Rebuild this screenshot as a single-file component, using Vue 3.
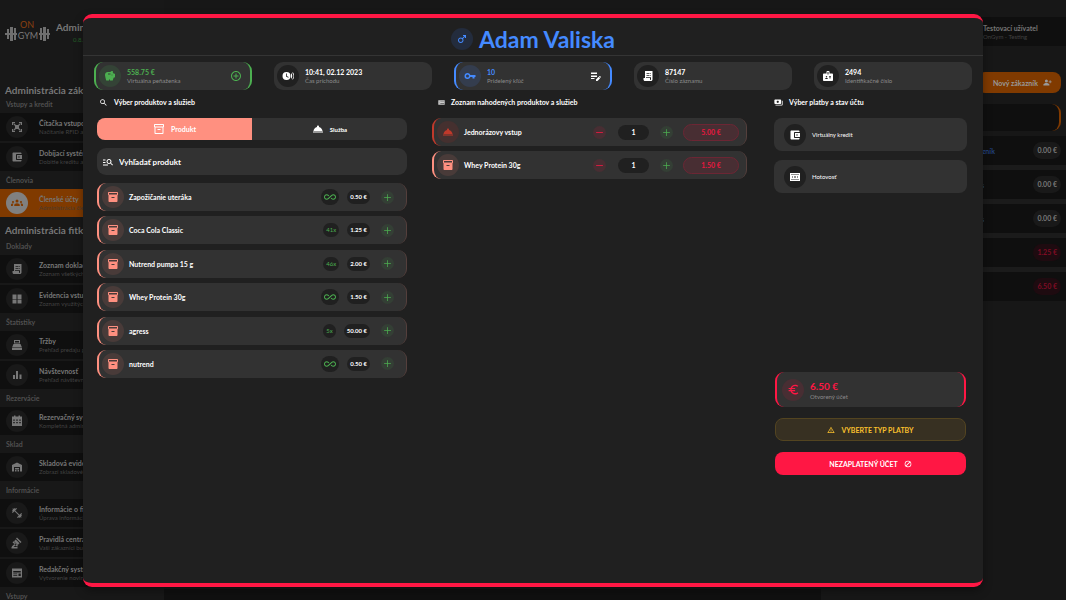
<script setup>
import { ref, h } from 'vue'

const paths = {
  piggy: 'M19.83 7.5l-2.27-2.27c.07-.42.18-.81.32-1.15C17.96 3.9 18 3.7 18 3.5 18 2.67 17.33 2 16.5 2c-1.64 0-3.09.79-4 2h-5C4.46 4 2 6.46 2 9.5S4.5 21 4.5 21H10v-2h2v2h5.5l1.68-5.59 2.82-.94V7.5h-2.17zM13 9H8V7h5v2zm3 2c-.55 0-1-.45-1-1s.45-1 1-1 1 .45 1 1-.45 1-1 1z',
  addCircle: 'M13 7h-2v4H7v2h4v4h2v-4h4v-2h-4V7zm-1-5C6.48 2 2 6.48 2 12s4.48 10 10 10 10-4.48 10-10S17.52 2 12 2zm0 18c-4.41 0-8-3.59-8-8s3.59-8 8-8 8 3.59 8 8-3.59 8-8 8z',
  search: 'M15.5 14h-.79l-.28-.27C15.41 12.59 16 11.11 16 9.5 16 5.91 13.09 3 9.5 3S3 5.91 3 9.5 5.91 16 9.5 16c1.61 0 3.09-.59 4.23-1.57l.27.28v.79l5 4.99L20.49 19l-4.99-5zm-6 0C7.01 14 5 11.99 5 9.5S7.01 5 9.5 5 14 7.01 14 9.5 11.99 14 9.5 14z',
  manage: 'M7 9H2V7h5v2zm0 3H2v2h5v-2zm13.59 7l-3.83-3.83c-.8.52-1.74.83-2.76.83-2.76 0-5-2.24-5-5s2.24-5 5-5 5 2.24 5 5c0 1.02-.31 1.96-.83 2.75L22 17.59 20.59 19zM17 11c0-1.65-1.35-3-3-3s-3 1.35-3 3 1.35 3 3 3 3-1.35 3-3zM2 19h10v-2H2v2z',
  box: 'M20 2H4c-1 0-2 .9-2 2v3.01c0 .72.43 1.34 1 1.69V20c0 1.1 1.1 2 2 2h14c.9 0 2-.9 2-2V8.7c.57-.35 1-.97 1-1.69V4c0-1.1-1-2-2-2zm-5 12H9v-2h6v2zm5-7H4V4l16-.02V7z',
  boxOutline: 'M20 2H4c-1 0-2 .9-2 2v3.01c0 .72.43 1.34 1 1.69V20c0 1.1 1.1 2 2 2h14c.9 0 2-.9 2-2V8.7c.57-.35 1-.97 1-1.69V4c0-1.1-1-2-2-2zm-1 18H5V9h14v11zm1-13H4V4h16v3zM9 12h6v2H9z',
  service: 'M2 17h20v2H2zm11.84-9.21c.1-.24.16-.51.16-.79 0-1.1-.9-2-2-2s-2 .9-2 2c0 .28.06.55.16.79C6.25 8.6 3.27 11.93 3 16h18c-.27-4.07-3.25-7.4-7.16-8.21z',
  infinity: 'M18.6 6.62c-1.44 0-2.8.56-3.77 1.53L12 10.66 10.48 12h.01L7.8 14.39c-.64.64-1.49.99-2.4.99-1.87 0-3.39-1.51-3.39-3.38S3.53 8.62 5.4 8.62c.91 0 1.76.35 2.44 1.03l1.13 1 1.51-1.34L9.22 8.2C8.2 7.18 6.84 6.62 5.4 6.62 2.42 6.62 0 9.04 0 12s2.42 5.38 5.4 5.38c1.44 0 2.8-.56 3.77-1.53l2.83-2.5.01.01L13.52 12h-.01l2.69-2.39c.64-.64 1.49-.99 2.4-.99 1.87 0 3.39 1.51 3.39 3.38s-1.52 3.38-3.39 3.38c-.9 0-1.76-.35-2.44-1.03l-1.14-1.01-1.51 1.34 1.27 1.12c1.02 1.01 2.37 1.57 3.82 1.57 2.98 0 5.4-2.41 5.4-5.38s-2.42-5.37-5.4-5.37z',
  male: 'M9.5 11C11.43 11 13 12.57 13 14.5S11.43 18 9.5 18 6 16.43 6 14.5 7.57 11 9.5 11zm0-2C6.46 9 4 11.46 4 14.5S6.46 20 9.5 20s5.5-2.46 5.5-5.5c0-1.16-.36-2.23-.97-3.12L18 7.42V10h2V4h-6v2h2.58l-3.97 3.97C11.73 9.36 10.66 9 9.5 9z',
  key: 'M7 6a6 6 0 1 0 5.7 8H17v3h4v-3h2v-4H12.7A6 6 0 0 0 7 6zm0 3a3 3 0 1 1 0 6 3 3 0 0 1 0-6z',
  editNote: 'M2 11h12v3H2zM2 5h12v3H2zM2 16h7v2H2zM18 12.9l.7-.7c.4-.4 1-.4 1.4 0l1.4 1.4c.4.4.4 1 0 1.4l-.7.7zM17.3 13.6l-5.3 5.3V22h3l5.3-5.3z',
  receipt: 'M6 2h15v17c0 1.700-1.300 3-3 3H6c-1.700 0-3-1.300-3-3v-3h3zM9 6.500V8h6V6.500zM16.500 6.500V8H18V6.500zM9 10v1.500h6V10zM16.500 10v1.500H18V10zM16 18v1c0 .6.400 1 1 1s1-.4 1-1v-4.500H8V16h8z',
  badge: 'M20 7h-5V4c0-1.1-.9-2-2-2h-2c-1.1 0-2 .9-2 2v3H4c-1.1 0-2 .9-2 2v11c0 1.1.9 2 2 2h16c1.1 0 2-.9 2-2V9c0-1.1-.9-2-2-2zM9 12c.83 0 1.5.67 1.5 1.5S9.83 15 9 15s-1.5-.67-1.5-1.5S8.17 12 9 12zm3 6H6v-.75c0-1 2-1.5 3-1.5s3 .5 3 1.5V18zm1-9h-2V4h2v5zm5 7.5h-4V15h4v1.5zm0-3h-4V12h4v1.5z',
  clock: 'M9 4a8 8 0 1 0 0 16A8 8 0 0 0 9 4zm3.5 11.5L8 13V7h1.6v5l3.800 2.100zM18 6.2v11.600a8 8 0 0 0 0-11.600zM21 4v2.500a9 9 0 0 1 0 11V20a11 11 0 0 0 0-16z',
  wallet: 'M21 18v1c0 1.1-.9 2-2 2H5c-1.11 0-2-.9-2-2V5c0-1.1.89-2 2-2h14c1.1 0 2 .9 2 2v1h-9c-1.11 0-2 .9-2 2v8c0 1.1.89 2 2 2h9zm-9-2h10V8H12v8zm4-2.5c-.83 0-1.5-.67-1.5-1.5s.67-1.5 1.5-1.5 1.5.67 1.5 1.5-.67 1.5-1.5 1.5z',
  payments: 'M19 14V6c0-1.1-.9-2-2-2H3c-1.1 0-2 .9-2 2v8c0 1.1.9 2 2 2h14c1.1 0 2-.9 2-2zm-9-1c-1.66 0-3-1.34-3-3s1.34-3 3-3 3 1.34 3 3-1.34 3-3 3zm13-6v11c0 1.1-.9 2-2 2H4v-2h17V7h2z',
  cash: 'M2 4h20v16H2zM4 6v1h16V6zM4 17v1h16v-1zM6 10v4h1v-4zM17 10v4h1v-4zM11 10v4h2v-4z',
  list: 'M1 4h22v16H1zM5 7v1h1V7zM5 11.500v1h1v-1zM5 16v1h1v-1zM8 8.500v1h13v-1zM8 14v1h13v-1z',
  euro: 'M15 18.5c-2.51 0-4.68-1.42-5.76-3.5H15v-2H8.58c-.05-.33-.08-.66-.08-1s.03-.67.08-1H15V9H9.24C10.32 6.92 12.5 5.5 15 5.5c1.61 0 3.09.59 4.23 1.57L21 5.3C19.41 3.87 17.3 3 15 3c-3.92 0-7.24 2.51-8.48 6H3v2h3.06c-.04.33-.06.66-.06 1s.02.67.06 1H3v2h3.52c1.24 3.49 4.56 6 8.48 6 2.31 0 4.41-.87 6-2.3l-1.78-1.77c-1.13.98-2.6 1.57-4.22 1.57z',
  warning: 'M12 5.99L19.53 19H4.47L12 5.99M12 2L1 21h22L12 2zm1 14h-2v2h2v-2zm0-6h-2v4h2v-4z',
  block: 'M12 2a10 10 0 1 0 0 20 10 10 0 0 0 0-20zm0 2.2c1.7 0 3.2.5 4.5 1.4L5.6 16.5A7.8 7.8 0 0 1 12 4.2zm0 15.6c-1.7 0-3.3-.6-4.600-1.500L18.400 7.400A7.800 7.800 0 0 1 12 19.800z',
  plus: 'M11 3h2v8h8v2h-8v8h-2v-8H3v-2h8z',
  minus: 'M3 11h18v2H3z',
  drone: 'M2 2h6v2.500H4.500V8H2zM16 2h6v6h-2.500V4.500H16zM2 16h2.500v3.500H8V22H2zM19.500 16H22v6h-6v-2.500h3.500zM7 5.500L10 8h4l3-2.500 1.500 1.500L16 10v4l2.500 3-1.500 1.500-3-2.500h-4l-3 2.500L5.500 17 8 14v-4L5.500 7z',
  groups: 'M12 5a3 3 0 1 0 0 6 3 3 0 0 0 0-6zM4 8a2 2 0 1 0 0 4.200A2 2 0 0 0 4 8zM20 8a2 2 0 1 0 0 4.200A2 2 0 0 0 20 8zM6.500 18v-2c0-2 3-3.500 5.500-3.500s5.500 1.500 5.500 3.500v2zM0 18v-2.500c0-1.500 2-2.500 5-2.200-1 .8-1.300 1.700-1.300 2.700v2zM24 18v-2.500c0-1.500-2-2.500-5-2.200 1 .8 1.300 1.700 1.300 2.700v2z',
  book: 'M3 3h8v9H3zM13 3h8v9h-8zM3 13h8v8H3zM13 13h8v8h-8z',
  pos: 'M6 2h12v7H6zM8 4v3h8V4zM5 10h14l3 7H2zM2 18h20v4H2z',
  bars: 'M10 20h4V4h-4v16zm-6 0h4v-8H4v8zM17 11v9h4v-9h-4z',
  calendar: 'M6 1h3v2h6V1h3v2h4v19H2V3h4zM4.500 9v2.500h3V9zm6 0v2.500h3V9zm6 0v2.500h3V9zm-12 5v2.500h3V14zm6 0v2.500h3V14zm6 0v2.500h3V14z',
  warehouse: 'M12 3L2 8v13h4v-9h12v9h4V8zM8 14v3h8v-3zM8 18v3h3v-3zM13 18v3h3v-3z',
  dumbbell: 'M20.57 14.86L22 13.43 20.57 12 17 15.57 8.43 7 12 3.43 10.57 2 9.14 3.43 7.71 2 5.57 4.14 4.14 2.71 2.71 4.14l1.43 1.43L2 7.71l1.43 1.43L2 10.57 3.43 12 7 8.43 15.57 17 12 20.57 13.43 22l1.43-1.43L16.29 22l2.14-2.14 1.43 1.43 1.43-1.43-1.43-1.43L22 16.29z',
  gavel: 'M1 21h12v2H1v-2zM5.24 8.07l2.83-2.83 14.14 14.14-2.83 2.83L5.24 8.070zM12.32 1l5.66 5.660-2.830 2.830-5.660-5.660L12.320 1zM3.830 9.480l5.660 5.660-2.830 2.830L1 12.310l2.830-2.830z',
  gavelFlip: 'M1 21h12v2H1zM18.5 8L14 3.500l2-2L22.500 8l-2 2zM8 14l-2-2 9-9 6 6-9 9-2-2-6 5-2-2z',
  web: 'M2 3h20v18H2zM4.500 8v3h15V8zM4.500 13v1.500h8V13zM4.500 16.500V18h8v-1.500zM15 13v5h4.500v-5z',
  personAdd: 'M9 4a4 4 0 1 0 0 8 4 4 0 0 0 0-8zM1 20v-2.500c0-3 5-4.500 8-4.500s8 1.500 8 4.500V20zM18 6h2v3h3v2h-3v3h-2v-3h-3V9h3z',
}
paths.gavel = 'M1 20h12v3H1zM12 1l9 9-2 2-9-9zM9.500 5L17 12.500l-3.500 3.500L6 8.500zM5 8.500l9 9-2 2-9-9zM8 13l2.500 2.500L5 20H2l-.5-1z'
delete paths.gavelFlip

const Icon = (props) =>
  h('svg', { viewBox: '0 0 24 24', class: 'icon', 'aria-hidden': 'true' }, [
    h('path', { d: paths[props.name], fill: 'currentColor', 'fill-rule': 'evenodd' }),
  ])
Icon.props = ['name']

const menu = [
  { title: 'Administrácia zákazníkov' },
  { section: 'Vstupy a kredit' },
  { icon: 'drone', name: 'Čítačka vstupov', note: 'Načítanie RFID alebo QR' },
  { icon: 'wallet', name: 'Dobíjací systém', note: 'Dobitie kreditu alebo vstupov' },
  { section: 'Členovia' },
  { icon: 'groups', name: 'Členské účty', note: 'Administrácia členov', active: true },
  { title: 'Administrácia fitka' },
  { section: 'Doklady' },
  { icon: 'receipt', name: 'Zoznam dokladov', note: 'Zoznam všetkých dokladov' },
  { icon: 'book', name: 'Evidencia vstupov', note: 'Zoznam využitých vstupov' },
  { section: 'Štatistiky' },
  { icon: 'pos', name: 'Tržby', note: 'Prehľad predaju produktov' },
  { icon: 'bars', name: 'Návštevnosť', note: 'Prehľad návštevnosti' },
  { section: 'Rezervácie' },
  { icon: 'calendar', name: 'Rezervačný systém', note: 'Kompletná administrácia' },
  { section: 'Sklad' },
  { icon: 'warehouse', name: 'Skladová evidencia', note: 'Zobrazí skladové zásoby' },
  { section: 'Informácie' },
  { icon: 'dumbbell', name: 'Informácie o fitku', note: 'Úprava informácií' },
  { icon: 'gavel', name: 'Pravidlá centra', note: 'Vaši zákazníci budú' },
  { icon: 'web', name: 'Redakčný systém', note: 'Vytvorenie noviniek' },
  { section: 'Vstupy' },
]

const accounts = [
  { name: 'zákazník', sum: '0.00 €', wide: true },
  { name: 's', sum: '0.00 €' },
  { name: 's', sum: '0.00 €' },
  { name: '', sum: '1.25 €', debt: true },
  { name: '', sum: '6.50 €', debt: true },
]

const stats = [
  { icon: 'piggy', value: '558.75 €', label: 'Virtuálna peňaženka', tone: 'green', action: 'addCircle', actionLabel: 'Pridať kredit' },
  { icon: 'clock', value: '10:41, 02.12 2023', label: 'Čas príchodu' },
  { icon: 'key', value: '10', label: 'Pridelený kľúč', tone: 'blue', action: 'editNote', actionLabel: 'Upraviť kľúč' },
  { icon: 'receipt', value: '87147', label: 'Číslo záznamu' },
  { icon: 'badge', value: '2494', label: 'Identifikačné číslo' },
]

const products = [
  { name: 'Zapožičanie uteráka', price: '0.50 €' },
  { name: 'Coca Cola Classic', stock: '41x', price: '1.25 €' },
  { name: 'Nutrend pumpa 15 g', stock: '46x', price: '2.00 €' },
  { name: 'Whey Protein 30g', price: '1.50 €' },
  { name: 'agress', stock: '5x', price: '50.00 €' },
  { name: 'nutrend', price: '0.50 €' },
]

const cart = ref([
  { name: 'Jednorázovy vstup', icon: 'service', tone: 'red', count: 1, price: '5.00 €' },
  { name: 'Whey Protein 30g', icon: 'box', tone: 'coral', count: 1, price: '1.50 €' },
])
const tab = ref('product')
const query = ref('')
</script>

<template>
  <div class="app">
    <aside class="sidebar">
      <div class="brand">
        <svg class="logo" viewBox="0 0 46 22" role="img" aria-label="ON GYM">
          <g fill="#6f6f6f">
            <rect x="0" y="13" width="12" height="2" />
            <rect x="2" y="9" width="2" height="10" />
            <rect x="5" y="7" width="3" height="14" />
            <rect x="9" y="8" width="2" height="12" />
            <rect x="34" y="13" width="11" height="2" />
            <rect x="35" y="8" width="2" height="12" />
            <rect x="38" y="7" width="3" height="14" />
            <rect x="42" y="9" width="2" height="10" />
          </g>
          <text x="22" y="8" font-size="9" text-anchor="middle" fill="#8a4010">ON</text>
          <text x="23" y="19" font-size="9" text-anchor="middle" fill="#7a7a7a">GYM</text>
        </svg>
        <div class="brand-text">
          <strong>Administrácia</strong>
          <span>0.8.1</span>
        </div>
      </div>
      <nav>
        <template v-for="(m, i) in menu" :key="i">
          <h2 v-if="m.title" class="menu-title">{{ m.title }}</h2>
          <h3 v-else-if="m.section" class="menu-section">{{ m.section }}</h3>
          <a v-else href="#" class="menu-item" :class="{ active: m.active }">
            <span class="disc"><Icon :name="m.icon" /></span>
            <span class="pair"><b>{{ m.name }}</b><small>{{ m.note }}</small></span>
          </a>
        </template>
      </nav>
    </aside>

    <main class="page">
      <div class="page-left"><div class="tray"></div></div>
      <div class="page-right">
        <div class="user"><b>Testovací užívatel</b><small>OnGym - Testing</small></div>
        <button class="new-client" type="button">Nový zákazník <Icon name="personAdd" /></button>
        <div class="filter"></div>
        <ul class="accounts">
          <li v-for="(a, i) in accounts" :key="i">
            <span class="who" :class="{ wide: a.wide }">{{ a.name }}</span>
            <span class="sum" :class="{ debt: a.debt }">{{ a.sum }}</span>
          </li>
        </ul>
      </div>
    </main>

    <div class="overlay">
      <section class="modal" role="dialog" aria-labelledby="client-name">
        <header class="modal-head">
          <span class="disc tone-blue"><Icon name="male" /></span>
          <h1 id="client-name">Adam Valiska</h1>
        </header>

        <div class="stats">
          <div v-for="s in stats" :key="s.label" class="stat" :class="s.tone && 'edge-' + s.tone">
            <span class="disc" :class="s.tone && 'tone-' + s.tone"><Icon :name="s.icon" /></span>
            <span class="pair"><b>{{ s.value }}</b><small>{{ s.label }}</small></span>
            <button v-if="s.action" type="button" class="stat-action" :aria-label="s.actionLabel"><Icon :name="s.action" /></button>
          </div>
        </div>

        <div class="columns">
          <section class="col">
            <h2 class="col-title"><Icon name="search" />Výber produktov a služieb</h2>
            <div class="tabs">
              <button type="button" :class="{ on: tab === 'product' }" @click="tab = 'product'"><Icon name="boxOutline" />Produkt</button>
              <button type="button" :class="{ on: tab === 'service' }" @click="tab = 'service'"><Icon name="service" />Služba</button>
            </div>
            <label class="find">
              <Icon name="manage" />
              <input v-model="query" type="text" placeholder="Vyhľadať produkt" aria-label="Vyhľadať produkt" />
            </label>
            <ul class="products">
              <li v-for="p in products" :key="p.name" class="line coral">
                <span class="disc tone-coral"><Icon name="box" /></span>
                <b class="line-name">{{ p.name }}</b>
                <span v-if="p.stock" class="stock">{{ p.stock }}</span>
                <span v-else class="stock endless"><Icon name="infinity" /></span>
                <span class="price">{{ p.price }}</span>
                <button type="button" class="round add" :aria-label="'Pridať ' + p.name"><Icon name="plus" /></button>
              </li>
            </ul>
          </section>

          <section class="col">
            <h2 class="col-title listed"><Icon name="list" />Zoznam nahodených produktov a služieb</h2>
            <ul class="cart">
              <li v-for="c in cart" :key="c.name" class="line" :class="c.tone">
                <span class="disc" :class="'tone-' + c.tone"><Icon :name="c.icon" /></span>
                <b class="line-name">{{ c.name }}</b>
                <button type="button" class="round sub" aria-label="Odobrať" @click="c.count--"><Icon name="minus" /></button>
                <input v-model="c.count" class="count" type="text" :aria-label="'Počet ' + c.name" />
                <button type="button" class="round add" aria-label="Pridať" @click="c.count++"><Icon name="plus" /></button>
                <span class="total-chip">{{ c.price }}</span>
              </li>
            </ul>
          </section>

          <section class="col">
            <h2 class="col-title pay"><Icon name="payments" />Výber platby a stav účtu</h2>
            <div class="methods">
              <button type="button" class="method"><span class="disc"><Icon name="wallet" /></span>Virtuálny kredit</button>
              <button type="button" class="method"><span class="disc"><Icon name="cash" /></span>Hotovosť</button>
            </div>
            <div class="checkout">
              <div class="bill">
                <span class="disc tone-crimson"><Icon name="euro" /></span>
                <span class="pair"><b>6.50 €</b><small>Otvorený účet</small></span>
              </div>
              <button type="button" class="act warn"><Icon name="warning" />VYBERTE TYP PLATBY</button>
              <button type="button" class="act danger">NEZAPLATENÝ ÚČET<Icon name="block" /></button>
            </div>
          </section>
        </div>
      </section>
    </div>
  </div>
</template>

<style>
body {
  background: #171717;
}
</style>

<style scoped>
* {
  box-sizing: border-box;
}
.app {
  position: relative;
  display: flex;
  height: 100vh;
  overflow: hidden;
  background: #171717;
  color: #fff;
  font-family: Lato, "Open Sans", sans-serif;
  font-size: 7px;
}
h1, h2, h3, ul {
  margin: 0;
  padding: 0;
  list-style: none;
}
button, input {
  font: inherit;
  color: inherit;
  border: 0;
  background: none;
  padding: 0;
  outline: 0;
}
.icon {
  display: block;
  flex: none;
  width: 12px;
  height: 12px;
}
.disc {
  display: flex;
  flex: none;
  align-items: center;
  justify-content: center;
  width: 22px;
  height: 22px;
  border-radius: 50%;
  background: #202020;
}
.pair {
  display: flex;
  flex-direction: column;
  min-width: 0;
  white-space: nowrap;
}
.pair b {
  font-size: 7px;
  line-height: 10px;
}
.pair small {
  font-size: 6px;
  line-height: 8px;
}

/* Sidebar */
.sidebar {
  flex: none;
  width: 164px;
  background: #181818;
  color: #777;
}
.brand {
  display: flex;
  gap: 5px;
  height: 82px;
  padding: 20px 0 0 5px;
}
.logo {
  width: 46px;
  height: 22px;
}
.brand-text {
  display: flex;
  flex-direction: column;
  line-height: 14px;
  font-size: 10px;
}
.brand-text span {
  padding-left: 17px;
  font-size: 6px;
  line-height: 12px;
  color: #256028;
}
.menu-title {
  height: 20px;
  padding: 0 5px;
  font-size: 10px;
  line-height: 22px;
  white-space: nowrap;
}
.brand + nav .menu-title:first-child {
  height: 15px;
  line-height: 16px;
}
.menu-section {
  height: 18px;
  margin-top: -2px;
  padding: 0 6px;
  font-size: 7px;
  line-height: 18px;
  color: #505050;
}
.menu-title + .menu-section {
  height: 16px;
  margin-top: 0;
  line-height: 14px;
}
.menu-item {
  display: flex;
  align-items: center;
  gap: 11px;
  height: 28px;
  margin-bottom: 2px;
  padding-left: 6px;
  background: #0f0f0f;
  color: #777;
  text-decoration: none;
}
.menu-item .disc {
  background: #191919;
}
.menu-item small {
  color: #424242;
}
.menu-item.active {
  background: #803a00;
}
.menu-item.active .disc {
  background: #808080;
  color: #803a00;
}
.menu-item.active small {
  color: #4a3a2e;
}

/* Page behind the dialog */
.page {
  display: grid;
  flex: 1;
  grid-template-columns: 1fr 245px;
  min-width: 0;
  color: #777;
}
.page-left {
  display: flex;
  align-items: flex-end;
}
.tray {
  flex: 1;
  height: 11px;
  background: #101010;
}
.page-right {
  padding-top: 17px;
}
.user {
  display: flex;
  flex-direction: column;
  height: 29px;
  padding: 6px 0 0 162px;
  background: #0f0f0f;
}
.user b {
  line-height: 10px;
  white-space: nowrap;
}
.user small {
  font-size: 6px;
  line-height: 8px;
  color: #424242;
}
.new-client {
  display: flex;
  align-items: center;
  justify-content: flex-end;
  gap: 5px;
  width: 84px;
  height: 21px;
  margin: 26px 5px 0 auto;
  padding-right: 9px;
  border-radius: 8px;
  background: #803a00;
  color: #999;
  font-weight: bold;
  white-space: nowrap;
}
.new-client .icon {
  width: 9px;
  height: 9px;
}
.filter {
  height: 27px;
  margin: 11px 5px 5px 8px;
  border-right: 2px solid #803a00;
  border-radius: 9px;
  background: #0f0f0f;
}
.accounts {
  display: flex;
  flex-direction: column;
  gap: 5px;
  background: #1b1b1b;
}
.accounts li {
  display: flex;
  align-items: center;
  justify-content: space-between;
  height: 29px;
  padding-right: 5px;
  background: #0f0f0f;
}
.who {
  width: 163px;
  text-align: right;
  font-weight: bold;
  color: #23427d;
}
.who.wide {
  width: 174px;
}
.sum {
  padding: 0 4px;
  border-radius: 9px;
  background: #191919;
  font-weight: bold;
  font-size: 7px;
  line-height: 17px;
}
.sum.debt {
  background: #1e0b10;
  color: #7f0c24;
}

/* Dialog */
.overlay {
  position: absolute;
  inset: 0;
  display: flex;
  padding: 14px 83px 13px;
}
.modal {
  flex: 1;
  min-width: 0;
  border-top: 4px solid #ff1744;
  border-bottom: 4px solid #ff1744;
  border-radius: 9px;
  background: #202020;
  box-shadow: 0 4px 10px rgba(0, 0, 0, 0.35);
}
.modal-head {
  display: flex;
  align-items: center;
  justify-content: center;
  gap: 6px;
  height: 38px;
  padding-top: 5px;
  border-bottom: 1px solid #343434;
  color: #448aff;
}
.modal-head h1 {
  font-size: 23px;
  line-height: 30px;
}
.tone-blue {
  background: #232c3d;
  color: #448aff;
}
.tone-green {
  background: #344336;
  color: #4caf50;
}
.tone-coral {
  background: #493b39;
  color: #ff9080;
}
.tone-red {
  background: #45302f;
  color: #c0392b;
}
.tone-crimson {
  background: #482e33;
  color: #ff1744;
}
.stats {
  display: grid;
  grid-template-columns: repeat(5, 1fr);
  gap: 22px;
  padding: 6px 11px 0;
}
.stat {
  display: flex;
  align-items: center;
  gap: 6px;
  height: 28px;
  padding: 0 10px 0 3px;
  border-radius: 9px;
  background: #323232;
}
.stat small,
.bill small {
  color: #8b8b8b;
}
.edge-green,
.edge-blue {
  padding: 0 8px 0 3px;
  border: solid #4caf50;
  border-width: 0 2px;
}
.edge-blue {
  border-color: #448aff;
}
.edge-green b,
.edge-green .stat-action {
  color: #4caf50;
}
.edge-blue b {
  color: #448aff;
}
.edge-blue .tone-blue {
  background: #343d4e;
}
.stat-action {
  margin-left: auto;
}
.columns {
  display: grid;
  grid-template-columns: 310fr 317fr 193fr;
  gap: 25px;
  padding: 4px 16px 0 14px;
}
.col {
  min-width: 0;
}
.col-title {
  display: flex;
  align-items: center;
  gap: 6px;
  height: 16px;
  margin-bottom: 8px;
  padding-left: 2px;
  font-size: 7px;
  white-space: nowrap;
}
.col-title .icon {
  width: 9px;
  height: 9px;
}
.col-title.listed {
  padding-left: 6px;
}
.col-title.listed .icon {
  width: 7px;
  height: 7px;
  color: #ccc;
}
.col-title.pay {
  padding-left: 0;
}
.tabs {
  display: flex;
  overflow: hidden;
  height: 22px;
  border-radius: 8px;
  background: #323232;
}
.tabs button {
  display: flex;
  flex: 1;
  align-items: center;
  justify-content: center;
  gap: 6px;
  font-size: 6px;
  font-weight: bold;
}
.tabs .on {
  background: #ff9080;
  font-size: 7px;
}
.find {
  display: flex;
  align-items: center;
  gap: 5px;
  height: 27px;
  margin: 8px 0;
  padding: 0 5px;
  border-radius: 9px;
  background: #323232;
}
.find input {
  flex: 1;
  min-width: 0;
  font-size: 8px;
  font-weight: bold;
}
.find input::placeholder {
  color: #fff;
  opacity: 1;
}
.products {
  display: flex;
  flex-direction: column;
  justify-content: space-between;
  min-height: 195px;
}
.cart {
  display: grid;
  gap: 5px;
  margin-right: 2px;
}
.line {
  display: flex;
  align-items: center;
  height: 28px;
  padding: 0 12px 0 3px;
  border-left: 2px solid #ff9080;
  border-right: 1px solid #543f3c;
  border-radius: 9px;
  background: #323232;
}
.line.red {
  border-left-color: #c0392b;
}
.cart .line {
  padding-right: 7px;
}
.line-name {
  flex: 1;
  padding-left: 5px;
}
.stock,
.price {
  border-radius: 9px;
  background: #202020;
  font-size: 6px;
  line-height: 14px;
}
.stock {
  min-width: 12px;
  margin-right: 8px;
  padding: 0 3px;
  text-align: center;
  color: #4caf50;
}
.stock.endless {
  padding: 2px 3px;
}
.price {
  margin-right: 11px;
  padding: 0 3px;
  font-weight: bold;
}
.round {
  display: flex;
  align-items: center;
  justify-content: center;
  width: 13px;
  height: 13px;
  border-radius: 50%;
}
.round .icon {
  width: 9px;
  height: 9px;
}
.add {
  background: #343f35;
  color: #4caf50;
}
.sub {
  background: #482e33;
  color: #ff1744;
}
.count {
  width: 31px;
  height: 15px;
  margin: 0 11px 0 12px;
  border-radius: 8px;
  background: #202020;
  text-align: center;
  font-weight: bold;
}
.total-chip {
  width: 56px;
  height: 17px;
  margin-left: 10px;
  border: 1px solid #6c2634;
  border-radius: 9px;
  background: #482e33;
  color: #e6183f;
  text-align: center;
  font-weight: bold;
  line-height: 15px;
}
.methods {
  display: grid;
  gap: 9px;
}
.method {
  display: flex;
  align-items: center;
  gap: 6px;
  height: 33px;
  padding-left: 10px;
  border-radius: 8px;
  background: #323232;
  font-size: 6px;
}
.checkout {
  display: grid;
  gap: 11px;
  margin: 179px 1px 0;
}
.bill {
  display: flex;
  align-items: center;
  gap: 6px;
  height: 35px;
  padding-left: 5px;
  border: solid #ff1744;
  border-width: 0 2px;
  border-radius: 9px;
  background: #323232;
}
.bill b {
  font-size: 10px;
  line-height: 14px;
  color: #ff1744;
}
.bill .icon {
  width: 13px;
  height: 13px;
}
.act {
  display: flex;
  align-items: center;
  justify-content: center;
  gap: 6px;
  height: 23px;
  border-radius: 8px;
  font-size: 7px;
  font-weight: bold;
}
.act .icon {
  width: 8px;
  height: 8px;
}
.warn {
  border: 1px solid #534420;
  background: #373022;
  color: #fbc02d;
}
.danger {
  background: #ff1744;
}
</style>
